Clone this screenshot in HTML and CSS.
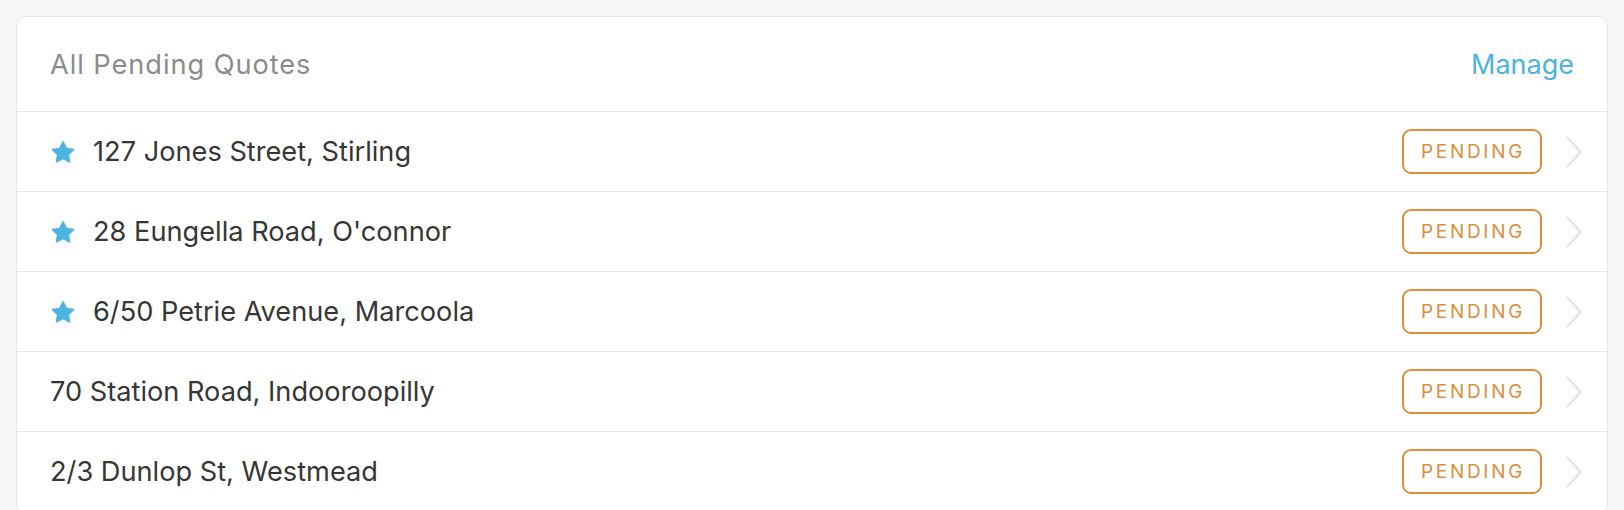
FILE: index.html
```html
<!DOCTYPE html>
<html lang="en">
<head>
<meta charset="utf-8">
<title>All Pending Quotes</title>
<link rel="stylesheet" href="styles.css">
</head>
<body>
<section class="card">
  <header class="card-header">
    <h2 class="card-title">All Pending Quotes</h2>
    <a class="manage" href="#">Manage</a>
  </header>
  <ul class="list">
    <li class="row">
      <svg class="star" viewBox="0 0 24 22" aria-hidden="true"><path d="M12 1.6l3 6.2 6.7.9-4.9 4.7 1.2 6.7L12 16.9l-6 3.2 1.2-6.7-4.9-4.7 6.7-.9z"/></svg>
      <span class="addr">127 Jones Street, Stirling</span>
      <span class="badge">PENDING</span>
      <svg class="chev" viewBox="0 0 16 32" aria-hidden="true"><polyline points="1.5,1.5 14.5,16 1.5,30.5"/></svg>
    </li>
    <li class="row">
      <svg class="star" viewBox="0 0 24 22" aria-hidden="true"><path d="M12 1.6l3 6.2 6.7.9-4.9 4.7 1.2 6.7L12 16.9l-6 3.2 1.2-6.7-4.9-4.7 6.7-.9z"/></svg>
      <span class="addr">28 Eungella Road, O'connor</span>
      <span class="badge">PENDING</span>
      <svg class="chev" viewBox="0 0 16 32" aria-hidden="true"><polyline points="1.5,1.5 14.5,16 1.5,30.5"/></svg>
    </li>
    <li class="row">
      <svg class="star" viewBox="0 0 24 22" aria-hidden="true"><path d="M12 1.6l3 6.2 6.7.9-4.9 4.7 1.2 6.7L12 16.9l-6 3.2 1.2-6.7-4.9-4.7 6.7-.9z"/></svg>
      <span class="addr">6/50 Petrie Avenue, Marcoola</span>
      <span class="badge">PENDING</span>
      <svg class="chev" viewBox="0 0 16 32" aria-hidden="true"><polyline points="1.5,1.5 14.5,16 1.5,30.5"/></svg>
    </li>
    <li class="row">
      <span class="addr">70 Station Road, Indooroopilly</span>
      <span class="badge">PENDING</span>
      <svg class="chev" viewBox="0 0 16 32" aria-hidden="true"><polyline points="1.5,1.5 14.5,16 1.5,30.5"/></svg>
    </li>
    <li class="row">
      <span class="addr">2/3 Dunlop St, Westmead</span>
      <span class="badge">PENDING</span>
      <svg class="chev" viewBox="0 0 16 32" aria-hidden="true"><polyline points="1.5,1.5 14.5,16 1.5,30.5"/></svg>
    </li>
  </ul>
</section>
</body>
</html>
```
FILE: styles.css
```css
* { box-sizing: border-box; }

html, body {
  margin: 0;
  padding: 0;
}

body {
  background: #f6f6f6;
  padding: 16px;
  font-family: Inter, "Liberation Sans", Arial, sans-serif;
  -webkit-font-smoothing: antialiased;
}

.card {
  background: #ffffff;
  border: 1px solid #e6e6e6;
  border-radius: 10px;
  overflow: hidden;
}

.card-header {
  display: flex;
  align-items: center;
  justify-content: space-between;
  height: 95px;
  padding: 0 33px 0 33px;
  border-bottom: 1px solid #e8e8e8;
}

.card-title {
  margin: 0;
  font-weight: 400;
  font-size: 27.2px;
  letter-spacing: 0.95px;
  color: #8b8b8b;
}

.manage {
  font-size: 27px;
  color: #4cb2df;
  text-decoration: none;
}

.list {
  list-style: none;
  margin: 0;
  padding: 0;
}

.row {
  display: flex;
  align-items: center;
  height: 80px;
  padding: 0 25px 0 33px;
  border-bottom: 1px solid #e8e8e8;
}

.star {
  width: 26px;
  height: 24px;
  margin-right: 17px;
  fill: #4db3e0;
  stroke: #4db3e0;
  stroke-width: 1.6;
  stroke-linejoin: round;
  flex: none;
}

.addr {
  font-size: 27.2px;
  color: #363636;
  white-space: nowrap;
}

.badge {
  margin-left: auto;
  width: 140px;
  height: 45px;
  border: 2px solid #dd8d3c;
  border-radius: 9px;
  display: flex;
  align-items: center;
  justify-content: center;
  padding-left: 2px;
  font-size: 19px;
  letter-spacing: 2.7px;
  color: #dd8d3c;
  flex: none;
}

.chev {
  width: 16px;
  height: 32px;
  margin-left: 24px;
  fill: none;
  stroke: #e4e4e4;
  stroke-width: 2.2;
  stroke-linecap: round;
  stroke-linejoin: round;
  flex: none;
}
```
